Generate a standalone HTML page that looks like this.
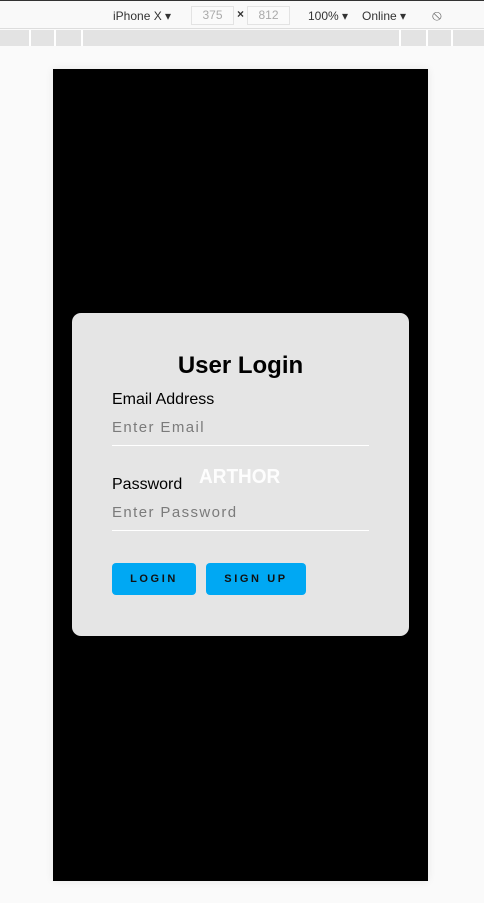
<!DOCTYPE html>
<html><head><style>
*{margin:0;padding:0;box-sizing:border-box}
body{width:484px;height:903px;background:#fafafa;font-family:"Liberation Sans",Arial,sans-serif;position:relative;overflow:hidden}
.top{position:absolute;left:0;top:0;width:484px;height:29px;background:#f9f9f9;border-top:1px solid #333;border-bottom:1px solid #ddd;font-size:12px;color:#333}
.top span{position:absolute;top:8px}
.box{position:absolute;top:5px;height:19px;border:1px solid #e3e3e3;color:#aaa;font-size:12px;text-align:center;line-height:17px;background:#fafafa}
.strip{position:absolute;left:0;top:30px;width:484px;height:16px;background:#e3e3e3}
.strip i{position:absolute;top:0;width:2px;height:16px;background:#fff}
.phone{position:absolute;left:53px;top:69px;width:375px;height:812px;background:#000;box-shadow:0 0 8px rgba(0,0,0,.08)}
.card{position:absolute;left:72px;top:313px;width:337px;height:323px;background:#e5e5e5;border-radius:9px}
h1{position:absolute;left:0;width:337px;top:39px;text-align:center;font-size:24px;font-weight:bold;color:#000}
.lbl{position:absolute;left:40px;font-size:16px;color:#000}
.ph{position:absolute;left:40px;font-size:15px;color:#7b7b7b;letter-spacing:1.4px}
.line{position:absolute;left:40px;width:257px;height:1px;background:#fff}
.btn{position:absolute;top:250px;height:32px;background:#00a8f3;border-radius:4px;font-size:11px;font-weight:bold;letter-spacing:2.6px;text-align:center;line-height:32px;color:#111}
.logo{position:absolute;left:127px;top:153px;font-size:20px;font-weight:bold;color:#fff;letter-spacing:0;transform:scaleX(.95);transform-origin:left;opacity:.95}
</style></head><body>
<div class="top">
<span style="left:113px">iPhone X ▾</span>
<div class="box" style="left:191px;width:43px">375</div>
<span style="left:237px;top:6px;font-weight:bold">×</span>
<div class="box" style="left:247px;width:43px">812</div>
<span style="left:308px">100% ▾</span>
<span style="left:362px">Online ▾</span>
<span style="left:432px;top:6px;font-size:15px;color:#666">⦸</span>
</div>
<div class="strip"><i style="left:29px"></i><i style="left:54px"></i><i style="left:81px"></i><i style="left:399px"></i><i style="left:426px"></i><i style="left:451px"></i></div>
<div class="phone"></div>
<div class="card">
<h1>User Login</h1>
<div class="lbl" style="top:78px">Email Address</div>
<div class="ph" style="top:106px">Enter Email</div>
<div class="line" style="top:132px"></div>
<div class="logo">ARTHOR</div>
<div class="lbl" style="top:163px">Password</div>
<div class="ph" style="top:191px">Enter Password</div>
<div class="line" style="top:217px"></div>
<div class="btn" style="left:40px;width:84px">LOGIN</div>
<div class="btn" style="left:134px;width:100px">SIGN UP</div>
</div>
</body></html>
